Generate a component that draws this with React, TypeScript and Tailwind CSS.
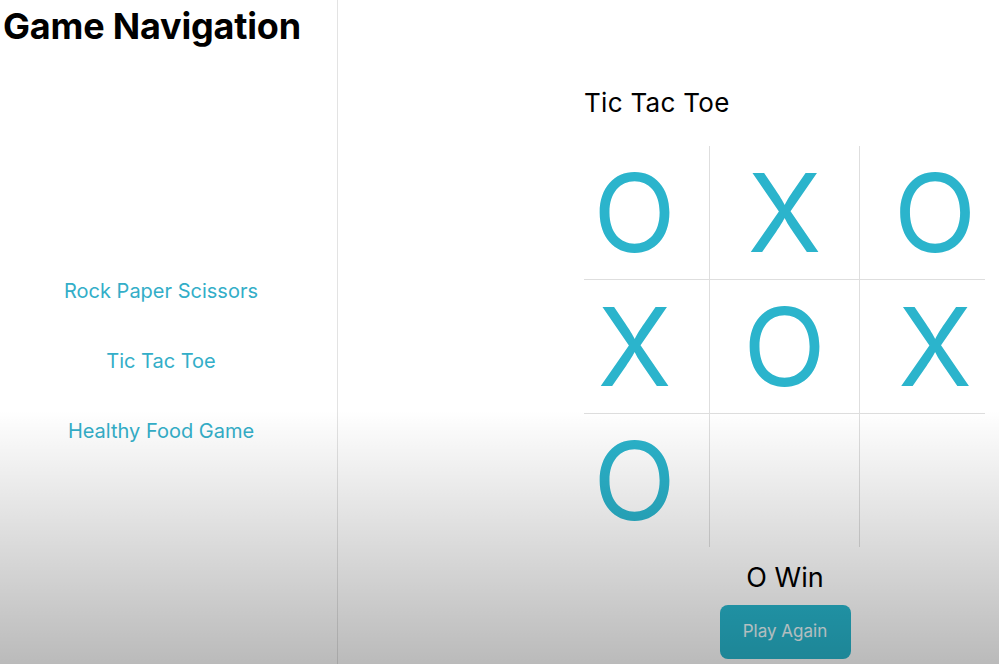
import React from "react";

const board: string[] = ["O", "X", "O", "X", "O", "X", "O", "", ""];

function Row({ cells }: { cells: string[] }) {
  return (
    <div className="flex h-[133px]">
      {cells.map((c, i) => (
        <div
          key={i}
          className={
            "w-[150px] h-full flex items-center justify-center text-[108px] leading-none text-[#2bb4cc] " +
            (i < 2 ? "border-r border-[#dedede]" : "")
          }
        >
          {c}
        </div>
      ))}
    </div>
  );
}

export default function App() {
  return (
    <div
      className="relative w-full h-[664px] overflow-hidden bg-white flex"
      style={{ fontFamily: "Inter, 'Noto Sans', sans-serif" }}
    >
      <aside className="w-[338px] shrink-0 h-full border-r border-[#e3e3e3] flex flex-col">
        <h1 className="mt-[8px] ml-[3px] text-[36px] leading-none font-bold text-black tracking-[-0.2px]">
          Game Navigation
        </h1>
        <nav className="mt-[237px] w-[322px] flex flex-col gap-[50px] text-[20px] leading-[20px] text-[#33aec8] text-center">
          <span>Rock Paper Scissors</span>
          <span>Tic Tac Toe</span>
          <span>Healthy Food Game</span>
        </nav>
      </aside>
      <main className="flex-1 flex flex-col">
        <div className="ml-[222px] w-[450px] shrink-0 flex flex-col">
          <h2 className="mt-[90px] ml-[24px] h-[27px] text-[26px] leading-none text-black tracking-[0.3px]">
            Tic Tac Toe
          </h2>
          <div className="mt-[29px] flex flex-col">
            <Row cells={board.slice(0, 3)} />
            <div className="ml-[24px] w-[401px] h-px bg-[#dedede]" />
            <Row cells={board.slice(3, 6)} />
            <div className="ml-[24px] w-[401px] h-px bg-[#dedede]" />
            <Row cells={board.slice(6, 9)} />
          </div>
          <div className="mt-[17px] text-center text-[27px] leading-none text-black">
            O Win
          </div>
          <div className="mt-[14px] flex justify-center">
            <button className="w-[131px] h-[54px] rounded-[8px] bg-[#28b6cd] text-white/90 text-[17px]">
              Play Again
            </button>
          </div>
        </div>
      </main>
      <div className="pointer-events-none absolute inset-x-0 bottom-0 h-[254px] bg-linear-to-b from-transparent to-black/[0.27]" />
    </div>
  );
}
